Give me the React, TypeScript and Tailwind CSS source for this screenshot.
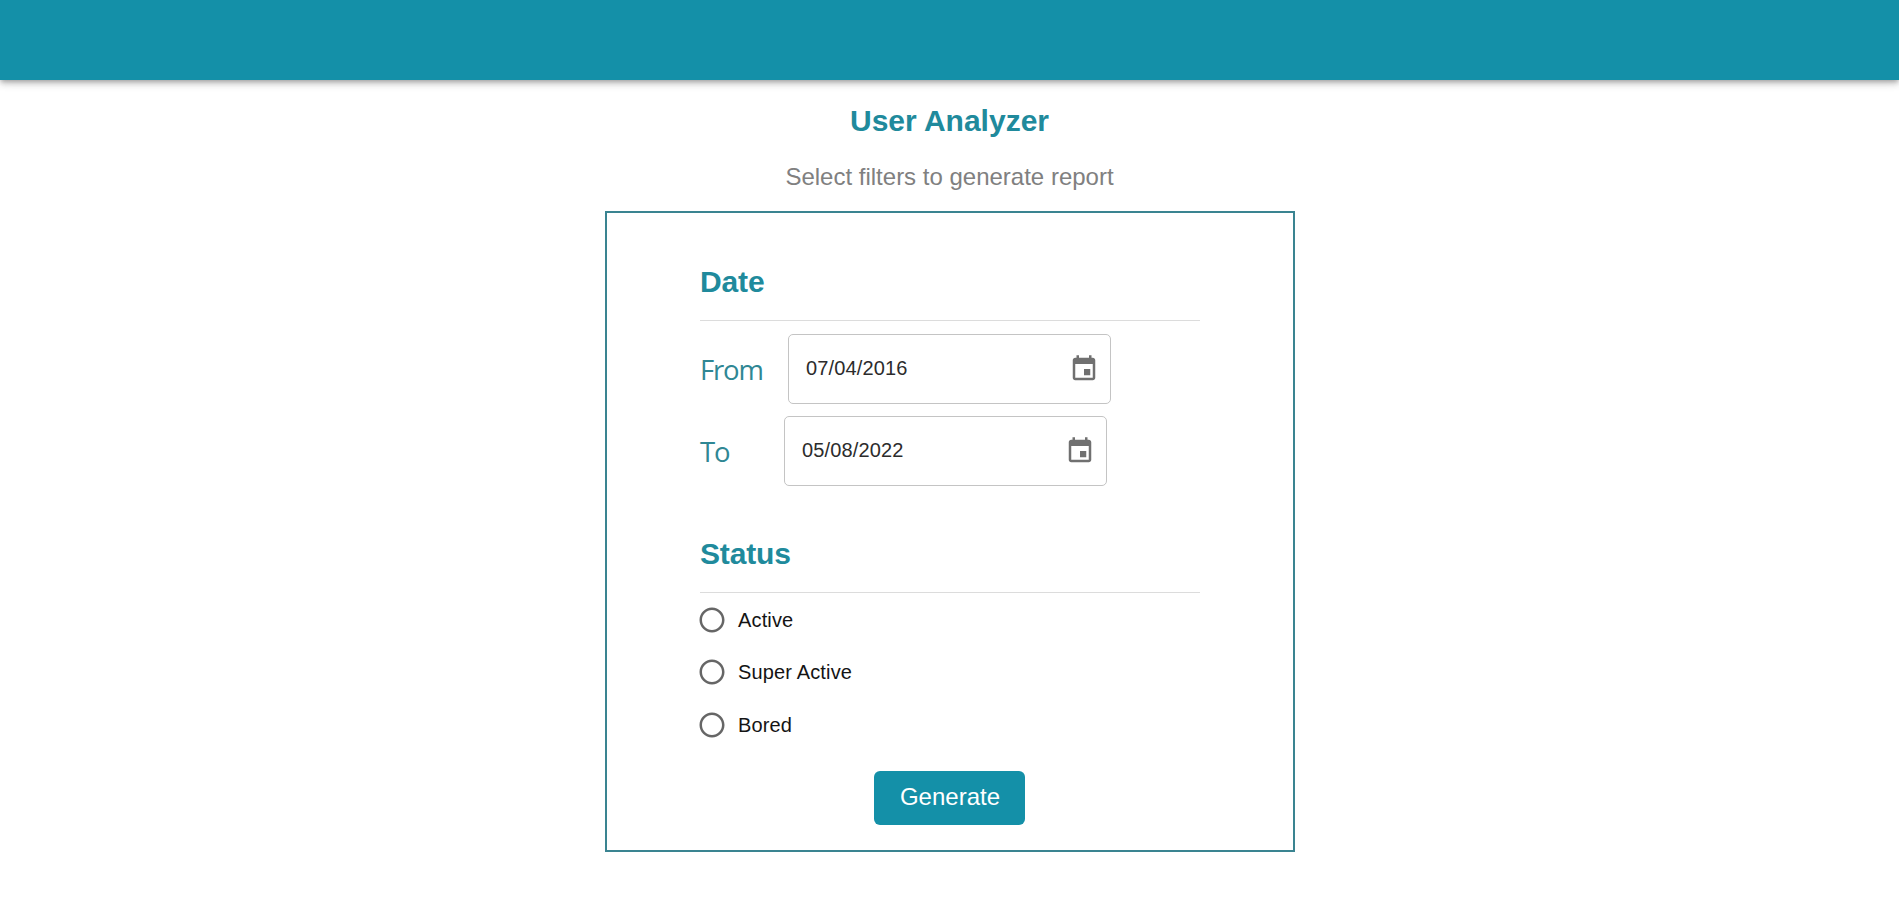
import { useState } from "react";

function CalendarIcon() {
  return (
    <svg viewBox="0 0 24 24" className="h-[30px] w-[30px] fill-[#707070]">
      <path d="M17 12h-5v5h5v-5zM16 1v2H8V1H6v2H5c-1.11 0-1.99.9-1.99 2L3 19c0 1.1.89 2 2 2h14c1.1 0 2-.9 2-2V5c0-1.1-.9-2-2-2h-1V1h-2zm3 18H5V8h14v11z" />
    </svg>
  );
}

function RadioIcon({ checked }: { checked: boolean }) {
  return (
    <svg viewBox="0 0 24 24" className="h-[30px] w-[30px] fill-[#666666]">
      <path d="M12 2C6.48 2 2 6.48 2 12s4.48 10 10 10 10-4.48 10-10S17.52 2 12 2zm0 18c-4.42 0-8-3.58-8-8s3.58-8 8-8 8 3.58 8 8-3.58 8-8 8z" />
      {checked && <circle cx="12" cy="12" r="5" />}
    </svg>
  );
}

function SectionTitle({ children }: { children: string }) {
  return (
    <h2 className="flex h-[78px] items-center border-b border-[#dcdcdc] text-[30px] leading-[33px] font-bold tracking-[-0.15px] text-[#208a9c]">
      {children}
    </h2>
  );
}

function DateField({ value }: { value: string }) {
  return (
    <div className="flex h-[70px] w-[323px] items-center justify-between rounded-[5px] border border-[#c4c4c4] pr-[11px] pl-[17px]">
      <span className="pb-0.5 text-xl leading-none tracking-[0.15px] text-[#2c2c2c]">{value}</span>
      <button type="button" aria-label="Choose date">
        <CalendarIcon />
      </button>
    </div>
  );
}

const labelClass =
  "pt-0.5 font-['Open_Sans','Noto_Sans',sans-serif] text-[27.5px] leading-none tracking-[-1.2px] text-[#2f8794]";

const statuses = ["Active", "Super Active", "Bored"];

export default function App() {
  const [status, setStatus] = useState("");

  return (
    <div className="flex h-[899px] flex-col items-center bg-white font-['Liberation_Sans',Arial,sans-serif]">
      <header className="h-20 w-full shrink-0 bg-[#1490a8] shadow-[0_2px_5px_-1px_rgba(0,0,0,0.3),0_5px_6px_0_rgba(0,0,0,0.1),0_1px_12px_0_rgba(0,0,0,0.1)]" />
      <h1 className="mt-6 text-[30px] leading-[33px] font-bold text-[#208a9c]">User Analyzer</h1>
      <p className="mt-[25px] text-2xl leading-[30px] text-[#808080]">Select filters to generate report</p>
      <main className="mt-[19px] ml-px flex h-[641px] w-[690px] shrink-0 flex-col border-2 border-[#3a8491] px-[93px] pt-[30px]">
        <section>
          <SectionTitle>Date</SectionTitle>
          <div className="mt-[13px] flex items-center">
            <span className={`w-[88px] ${labelClass}`}>From</span>
            <DateField value="07/04/2016" />
          </div>
          <div className="mt-3 flex items-center">
            <span className={`w-[84px] ${labelClass}`}>To</span>
            <DateField value="05/08/2022" />
          </div>
        </section>
        <section className="mt-[29px]">
          <SectionTitle>Status</SectionTitle>
          <div role="radiogroup" className="-ml-[3px] flex flex-col items-start pt-px">
            {statuses.map((name) => (
              <button
                key={name}
                type="button"
                role="radio"
                aria-checked={status === name}
                onClick={() => setStatus(name)}
                className="flex h-[52.3px] items-center gap-[11px] text-xl leading-none tracking-[0.15px] text-[#141414]"
              >
                <RadioIcon checked={status === name} />
                {name}
              </button>
            ))}
          </div>
        </section>
        <button
          type="button"
          className="mt-[20.1px] mr-px h-[54px] w-[151px] self-center rounded-md bg-[#1490a8] pb-0.5 pl-px text-2xl leading-none text-white"
        >
          Generate
        </button>
      </main>
    </div>
  );
}
